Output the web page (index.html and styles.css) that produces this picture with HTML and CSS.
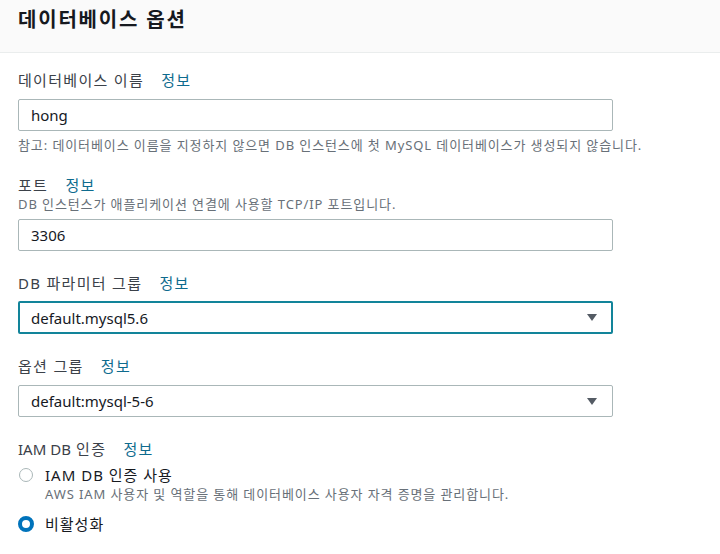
FILE: index.html
```html
<!DOCTYPE html>
<html lang="ko">
<head>
    <meta charset="UTF-8">
    <meta name="viewport" content="width=device-width, initial-scale=1.0">
    <title>데이터베이스 옵션</title>
    <link rel="stylesheet" href="styles.css">
</head>
<body>

    <div class="header">
        <h2>데이터베이스 옵션</h2>
    </div>

    <div class="content">
        <div class="field first">
            <div class="label">데이터베이스 이름 <a class="info" href="#">정보</a></div>
            <div class="input">hong</div>
            <div class="hint below">참고: 데이터베이스 이름을 지정하지 않으면 DB 인스턴스에 첫 MySQL 데이터베이스가 생성되지 않습니다.</div>
        </div>

        <div class="field">
            <div class="label">포트 <a class="info" href="#">정보</a></div>
            <div class="hint">DB 인스턴스가 애플리케이션 연결에 사용할 TCP/IP 포트입니다.</div>
            <div class="input near">3306</div>
        </div>

        <div class="field">
            <div class="label">DB 파라미터 그룹 <a class="info" href="#">정보</a></div>
            <div class="input select focused">
                <span>default.mysql5.6</span>
                <svg class="caret" width="10" height="7" viewBox="0 0 10 7"><path d="M0 0h10L5 7z" fill="#545b64"/></svg>
            </div>
        </div>

        <div class="field">
            <div class="label">옵션 그룹 <a class="info" href="#">정보</a></div>
            <div class="input select">
                <span>default:mysql-5-6</span>
                <svg class="caret" width="10" height="7" viewBox="0 0 10 7"><path d="M0 0h10L5 7z" fill="#545b64"/></svg>
            </div>
        </div>

        <div class="field">
            <div class="label"><span class="tight">IAM DB</span> 인증 <a class="info" href="#">정보</a></div>
            <div class="radio-row">
                <span class="radio"></span>
                <div>
                    <div class="radio-label">IAM DB 인증 사용</div>
                    <div class="hint">AWS IAM 사용자 및 역할을 통해 데이터베이스 사용자 자격 증명을 관리합니다.</div>
                </div>
            </div>
            <div class="radio-row second">
                <span class="radio checked"></span>
                <div class="radio-label">비활성화</div>
            </div>
        </div>
    </div>

</body>
</html>
```

FILE: styles.css
```css
body {
    font-family: "Noto Sans", "Noto Sans CJK KR", sans-serif;
    margin: 0;
    padding: 0;
    background-color: white;
    color: #16191f;
}
.header {
    height: 52px;
    background-color: #fafafa;
    border-bottom: 1px solid #eaeded;
    padding: 0 18px;
    box-sizing: content-box;
}
.header h2 {
    margin: 0;
    padding-top: 6px;
    font-size: 20px;
    line-height: 28px;
    font-weight: bold;
    letter-spacing: 1.8px;
}
.content {
    padding: 0 18px;
}
.field {
    margin-top: 21px;
}
.field.first {
    margin-top: 16px;
}
.label {
    font-size: 15px;
    line-height: 22px;
    color: #3b4149;
    letter-spacing: 1.3px;
}
.label .tight {
    letter-spacing: 0;
}
.info {
    color: #0e6b8e;
    text-decoration: none;
    margin-left: 12px;
}
.input {
    width: 595px;
    height: 32px;
    margin-top: 8px;
    box-sizing: border-box;
    border: 1px solid #aab7b8;
    border-radius: 2px;
    padding: 0 12px;
    font-size: 15px;
    line-height: 30px;
    color: #16191f;
}
.input.near {
    margin-top: 7px;
}
.select {
    display: flex;
    justify-content: space-between;
    align-items: center;
    padding-right: 15px;
}
.select.focused {
    height: 33px;
    margin-top: 7px;
    border: 2px solid #12849a;
    padding-left: 11px;
    padding-right: 14px;
}
.hint {
    font-size: 13px;
    line-height: 16px;
    color: #687078;
    letter-spacing: 0.9px;
}
.hint.below {
    margin-top: 6px;
}
.radio-row {
    display: flex;
    align-items: flex-start;
    margin-top: 4px;
}
.radio-row.second {
    margin-top: 11px;
}
.radio {
    width: 14px;
    height: 14px;
    box-sizing: border-box;
    border: 1px solid #aab7b8;
    border-radius: 50%;
    margin: 4px 12px 0 1px;
    flex: none;
}
.radio.checked {
    width: 16px;
    height: 16px;
    border: 4px solid #0073bb;
    margin: 3px 11px 0 0;
}
.radio-label {
    font-size: 15px;
    line-height: 22px;
    letter-spacing: 1px;
}
```
